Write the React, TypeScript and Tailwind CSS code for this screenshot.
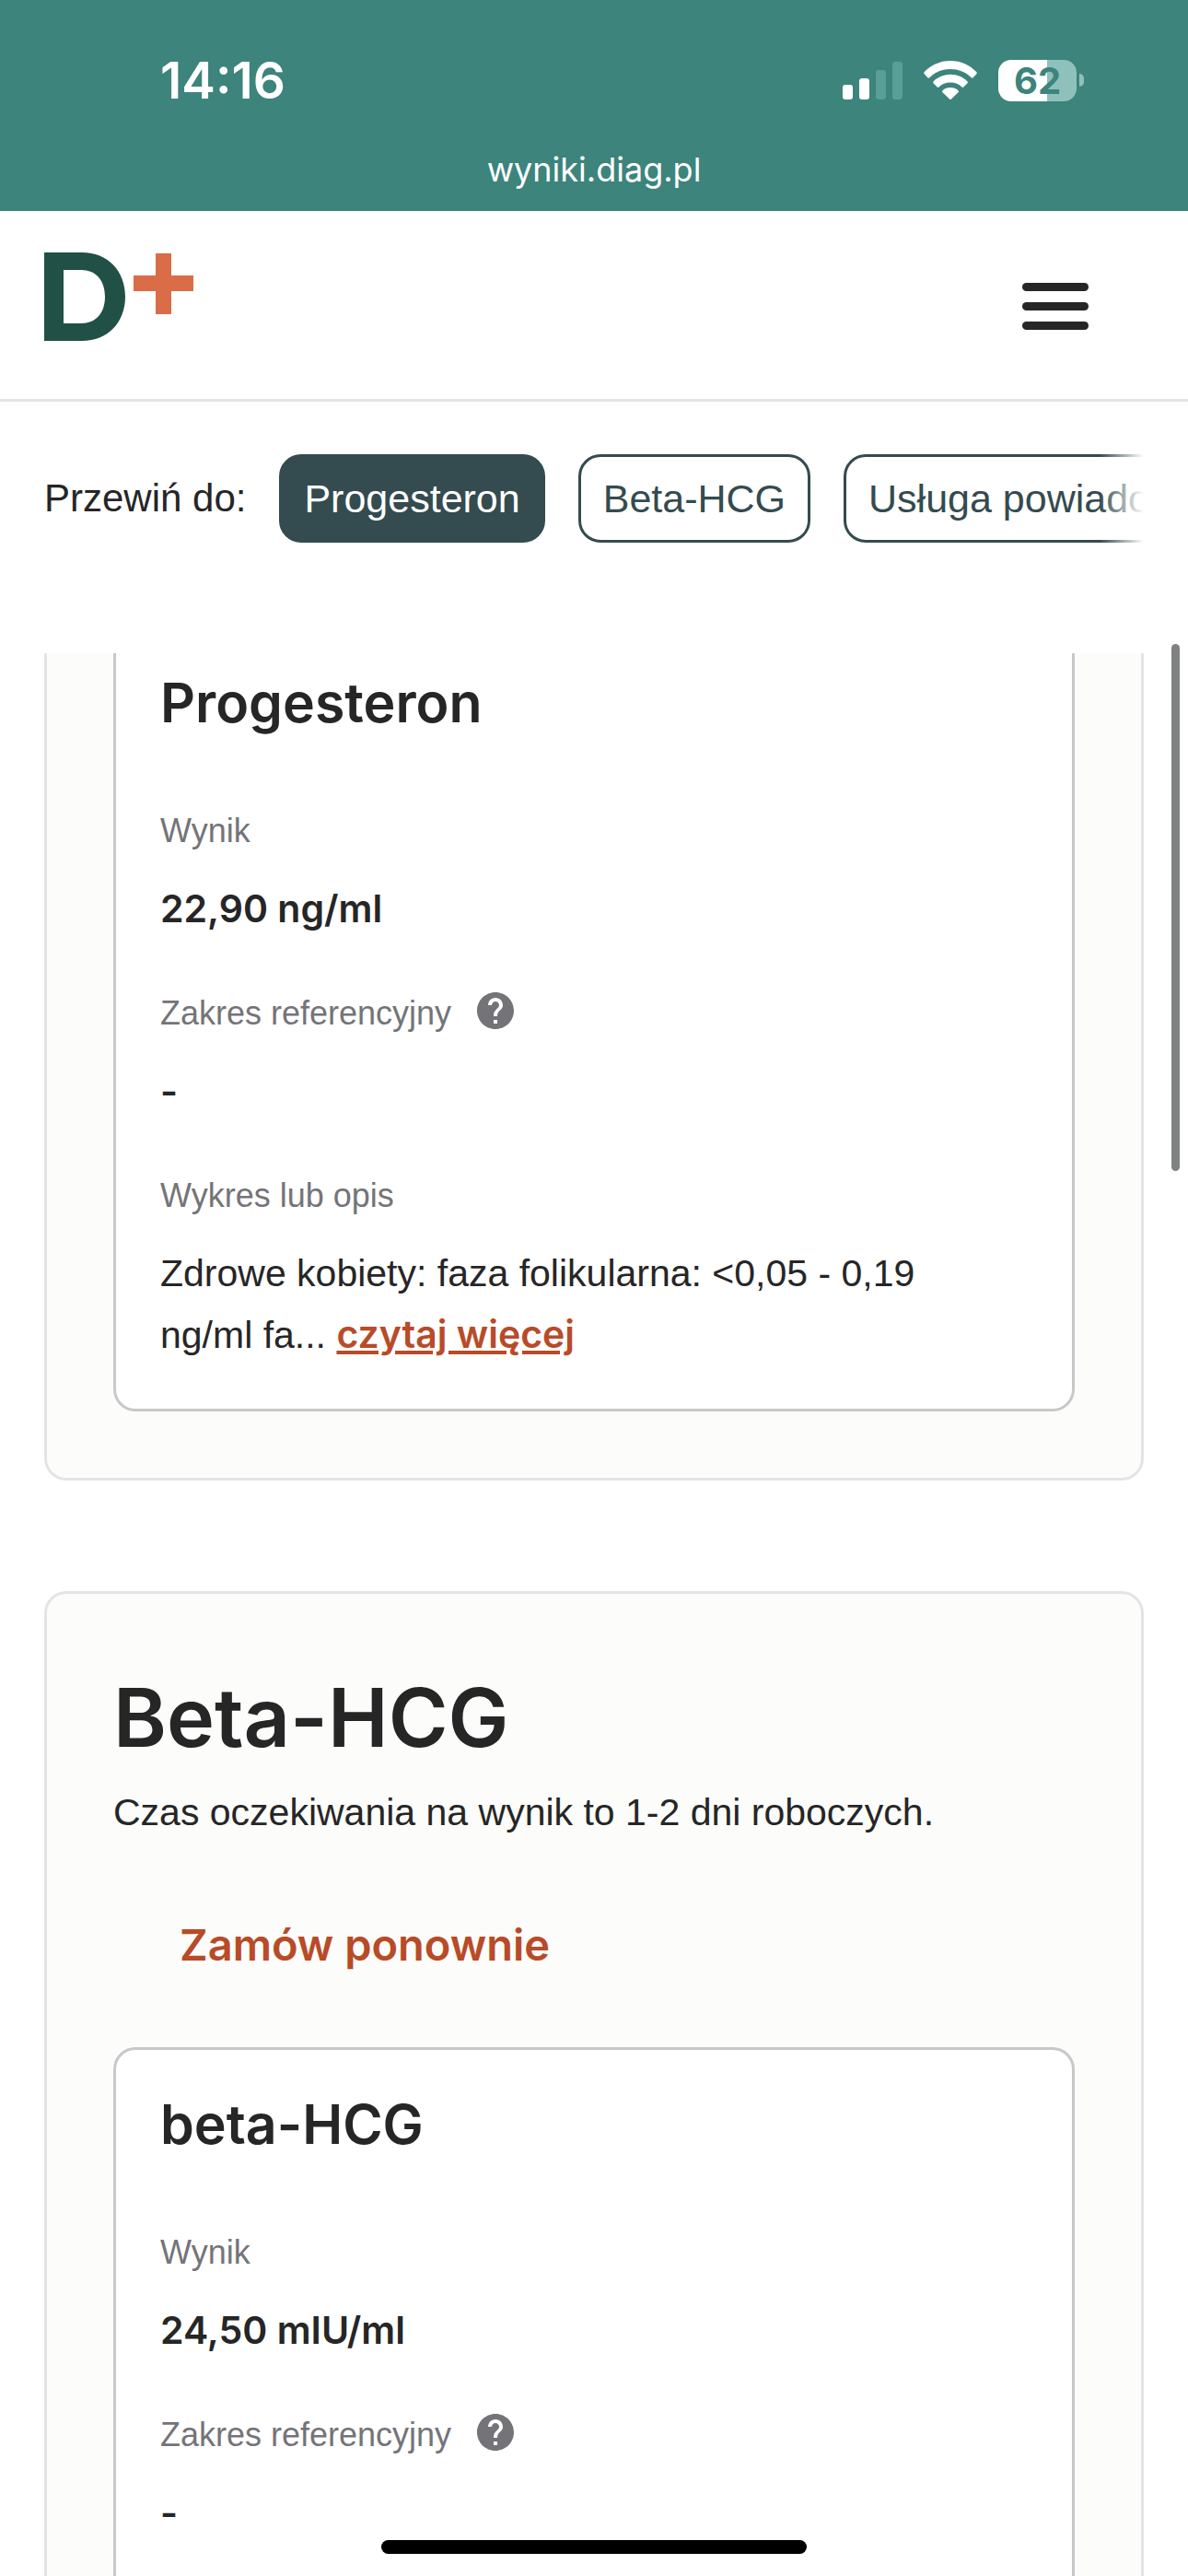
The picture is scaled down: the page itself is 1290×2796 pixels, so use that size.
import type { ReactNode } from 'react';
import { MdHelp } from 'react-icons/md';
import clsx from 'clsx';

const sections = ['Progesteron', 'Beta-HCG', 'Usługa powiadomień'];

function StatusBar() {
  return (
    <div className="bg-[#3c847c] text-white shrink-0 font-[Inter,sans-serif]">
      <div className="flex items-center justify-between h-[174px] pl-[174px] pr-[113px]">
        <span className="text-[55px] leading-[60px] font-semibold">14:16</span>
        <div className="flex items-center gap-[23px]">
          <svg width="65" height="41" viewBox="0 0 65 41" aria-label="Zasięg">
            <rect x="0" y="25" width="11" height="16" rx="3" fill="#fff" />
            <rect x="18" y="18" width="11" height="23" rx="3" fill="#fff" />
            <rect x="36" y="9" width="11" height="32" rx="3" fill="#599f97" />
            <rect x="54" y="0" width="11" height="41" rx="3" fill="#599f97" />
          </svg>
          {/* Wi-Fi */}
          <svg width="58" height="42" viewBox="0 0 58 42" fill="#fff" aria-label="Wi-Fi">
            <path d="M29 0C40.200 0 50.200 4.600 57.200 12.100Q58.300 13.300 57.200 14.500L53.400 18.400Q52.600 19.200 51.700 18.300C45.900 12.400 38 9 29 9S12.100 12.400 6.300 18.300Q5.400 19.200 4.600 18.400L.8 14.500Q-.3 13.300.8 12.100C7.800 4.600 17.800 0 29 0Z" />
            <path d="M29 14.800C36.300 14.800 42.700 17.700 47.300 22.300Q48.400 23.400 47.300 24.500L43.300 28.500Q42.400 29.300 41.500 28.500C38.300 25.500 33.900 23.600 29 23.600S19.700 25.500 16.500 28.500Q15.600 29.300 14.700 28.500L10.700 24.500Q9.600 23.400 10.700 22.300C15.300 17.700 21.700 14.800 29 14.800Z" />
            <path d="M29 29C32.300 29 35.200 30.200 37.500 32.200Q38.500 33.200 37.500 34.200L30 41.600Q29 42.500 28 41.600L20.500 34.200Q19.500 33.200 20.500 32.200C22.800 30.200 25.700 29 29 29Z" />
          </svg>
          <div className="flex items-center gap-[3px]">
            <div className="flex items-center justify-center w-[85px] h-[45px] rounded-[14px] bg-linear-to-r from-white from-62% to-[#90c0bc] to-62% text-[#3c847c] text-[40px] leading-[45px] font-bold">
              62
            </div>
            <div className="w-[5px] h-[14px] rounded-r-full bg-[#90c0bc]" />
          </div>
        </div>
      </div>
      <p className="h-[55px] text-center text-[36px] leading-[20px]">wyniki.diag.pl</p>
    </div>
  );
}

function Header() {
  return (
    <header className="flex items-start justify-between shrink-0 h-[207px] px-12 pt-[45px] border-b-3 border-[#e4e4e4]">
      <a href="#" aria-label="Diagnostyka">
        <svg width="162" height="97" viewBox="0 0 162 97">
          <path
            fill="#215046"
            fillRule="evenodd"
            d="M0 0H41C69 0 88 20 88 48S69 96 41 96H0ZM21 19V77H40C56 77 66 66 66 48S56 19 40 19Z"
          />
          <path fill="#db6c48" d="M121 1H138V25H162V42H138V67H121V42H97V25H121Z" />
        </svg>
      </a>
      <button
        type="button"
        aria-label="Menu"
        className="flex flex-col gap-3 mt-[33px] mr-[60px] w-[72px]"
      >
        <span className="w-full h-[9px] rounded-full bg-[#262626]" />
        <span className="w-full h-[9px] rounded-full bg-[#262626]" />
        <span className="w-full h-[9px] rounded-full bg-[#262626]" />
      </button>
    </header>
  );
}

function SectionNav() {
  return (
    <nav className="relative shrink-0 mx-12 mt-[57px] mb-[120px]">
      <div className="flex items-center gap-9 overflow-hidden whitespace-nowrap leading-[66px]">
        <span className="shrink-0 text-[42px]">Przewiń do:</span>
        {sections.map((name, i) => (
          <button
            key={name}
            type="button"
            className={clsx(
              'shrink-0 h-24 px-6 border-3 rounded-3xl border-[#344b4f] text-[43px]',
              i === 0 ? 'bg-[#344b4f] text-white' : 'bg-white text-[#344b4f]',
            )}
          >
            {name}
          </button>
        ))}
      </div>
      {/* Fade on the scrollable edge */}
      <div className="absolute inset-y-0 right-0 w-12 bg-linear-to-r from-transparent to-white" />
    </nav>
  );
}

function Field({ label, help, children }: { label: string; help?: boolean; children: ReactNode }) {
  return (
    <div>
      <dt className="flex items-start gap-6 mb-6 text-[36px] leading-[54px] text-[#747478]">
        {label}
        {help && (
          <button type="button" aria-label="Pomoc">
            <MdHelp className="size-12" />
          </button>
        )}
      </dt>
      <dd className="text-[41px] leading-[66px]">{children}</dd>
    </div>
  );
}

function Value({ children }: { children: ReactNode }) {
  return <strong className="block font-[Inter,sans-serif] font-semibold">{children}</strong>;
}

function ResultName({ children }: { children: ReactNode }) {
  return (
    <h3 className="mb-[79px] font-[Inter,sans-serif] text-[59px] leading-[66px] font-semibold">
      {children}
    </h3>
  );
}

export default function App() {
  return (
    <div className="relative flex flex-col h-screen overflow-hidden bg-white text-[#262626] font-['Liberation_Sans',sans-serif]">
      <StatusBar />
      <Header />
      <SectionNav />

      <main className="flex flex-col gap-[120px] px-12">
        {/* Scrolled under the navigation, so its top edge is out of view */}
        <article className="px-[72px] pb-[72px] border-x-3 border-b-3 border-[#e4e4e4] rounded-b-3xl bg-[#fcfcfa]">
          <section className="px-12 pt-[21px] pb-[47px] border-x-3 border-b-3 border-[#c8c8ca] rounded-b-3xl bg-white">
            <ResultName>Progesteron</ResultName>
            <dl className="flex flex-col gap-[54px]">
              <Field label="Wynik">
                <Value>22,90 ng/ml</Value>
              </Field>
              <Field label="Zakres referencyjny" help>
                <Value>-</Value>
              </Field>
              <Field label="Wykres lub opis">
                Zdrowe kobiety: faza folikularna: &lt;0,05 - 0,19 ng/ml&nbsp;fa...{' '}
                <a
                  href="#"
                  className="font-[Inter,sans-serif] font-semibold text-[#b84b28] underline"
                >
                  czytaj więcej
                </a>
              </Field>
            </dl>
          </section>
        </article>

        <article className="px-[72px] py-[72px] border-3 border-[#e4e4e4] rounded-3xl bg-[#fcfcfa]">
          <h2 className="font-[Inter,sans-serif] text-[88px] leading-[124px] font-semibold">
            Beta-HCG
          </h2>
          <p className="mt-2 text-[41px] leading-[66px]">
            Czas oczekiwania na wynik to 1-2 dni roboczych.
          </p>
          <button
            type="button"
            className="block my-12 h-[126px] px-[72px] font-[Inter,sans-serif] text-[47px] font-semibold text-[#b84b28]"
          >
            Zamów ponownie
          </button>
          <section className="px-12 pt-12 pb-[120px] border-3 border-[#c8c8ca] rounded-3xl bg-white">
            <ResultName>beta-HCG</ResultName>
            <dl className="flex flex-col gap-[54px]">
              <Field label="Wynik">
                <Value>24,50 mIU/ml</Value>
              </Field>
              <Field label="Zakres referencyjny" help>
                <Value>-</Value>
              </Field>
            </dl>
          </section>
        </article>
      </main>

      {/* Scroll thumb and home indicator */}
      <div className="absolute top-[699px] right-[9px] w-[9px] h-[572px] rounded-full bg-[#7f8280]" />
      <div className="absolute bottom-6 left-1/2 -translate-x-1/2 w-[462px] h-[15px] rounded-full bg-black" />
    </div>
  );
}
